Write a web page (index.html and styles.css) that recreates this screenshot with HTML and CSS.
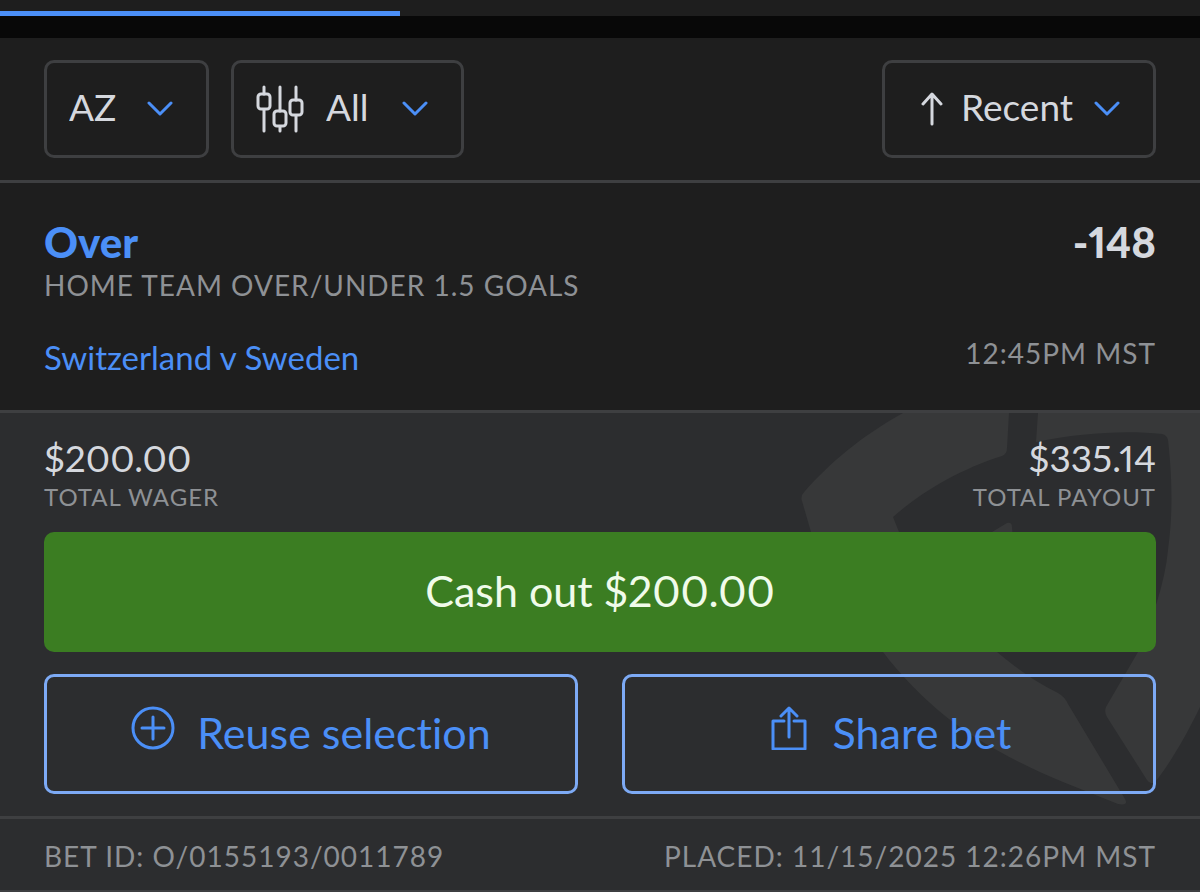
FILE: index.html
```html
<!DOCTYPE html>
<html lang="en">
<head>
  <meta charset="UTF-8">
  <meta name="viewport" content="width=device-width, initial-scale=1.0">
  <title>My Bets</title>
  <link rel="stylesheet" href="styles.css">
</head>
<body>
  <div class="tabs"><div class="tab-indicator"></div></div>

  <div class="filters">
    <div class="picker">
      <select class="state" aria-label="State"><option>AZ</option></select>
      <svg class="chevron" viewBox="0 0 28 16"><path d="M3 2l11 11L25 2"/></svg>
    </div>
    <div class="picker">
      <svg class="sliders" viewBox="0 0 48 48">
        <path d="M8 2v7M8 25v21M24 2v24M24 42v4M40 2v13M40 31v15"/>
        <rect x="2" y="9" width="12" height="15" rx="3"/>
        <rect x="18" y="26" width="12" height="15" rx="3"/>
        <rect x="34" y="15" width="12" height="15" rx="3"/>
      </svg>
      <select class="type" aria-label="Bet type"><option>All</option></select>
      <svg class="chevron" viewBox="0 0 28 16"><path d="M3 2l11 11L25 2"/></svg>
    </div>
    <div class="picker sort">
      <svg class="arrow" viewBox="0 0 22 34"><path d="M11 32V3M2 12l9-10 9 10"/></svg>
      <select class="order" aria-label="Sort by"><option>Recent</option></select>
      <svg class="chevron" viewBox="0 0 28 16"><path d="M3 2l11 11L25 2"/></svg>
    </div>
  </div>

  <div class="bet">
    <div class="row">
      <h1>Over</h1>
      <span class="odds">-148</span>
    </div>
    <p class="label">HOME TEAM OVER/UNDER 1.5 GOALS</p>
    <div class="row event">
      <a href="#" class="match">Switzerland v Sweden</a>
      <span class="label">12:45PM MST</span>
    </div>
  </div>

  <div class="summary">
    <svg class="watermark" viewBox="0 0 400 402">
      <path d="M103 0C60 24 30 50 5 78Q0 83 2 88L11 119Q34 187 83 239C98 259 125 288 153 309C180 330 226 354 263 369L318 391Q329 393 325 386L268 291Q265 284 258 280C238 270 220 258 197 239Q130 190 99 119L93 104C120 80 160 56 202 43Q207 41 207 35L209 0Z"/>
      <path d="M185 140L192 119L207 110Q212 109 212 114L214 140Z"/>
      <path d="M238 0L236 29C280 20 325 17 362 21Q367 22 368 27C374 80 371 115 368 137C365 170 352 207 338 239L306 294Q304 299 307 304L347 367Q351 373 356 368C370 350 385 325 400 294V0Z"/>
    </svg>
    <div class="row">
      <div>
        <p class="amount">$200.00</p>
        <p class="label small">TOTAL WAGER</p>
      </div>
      <div class="right">
        <p class="amount">$335.14</p>
        <p class="label small">TOTAL PAYOUT</p>
      </div>
    </div>
    <button class="cashout">Cash out $200.00</button>
    <div class="actions">
      <button class="outline">
        <svg viewBox="0 0 44 44"><circle cx="22" cy="22" r="20"/><path d="M22 11v22M11 22h22"/></svg>
        Reuse selection
      </button>
      <button class="outline">
        <svg viewBox="0 0 44 44"><path d="M17 15H6v28h32V15H27M22 31V3M14 10l8-8 8 8"/></svg>
        Share bet
      </button>
    </div>
  </div>

  <div class="footer">
    <span class="label">BET ID: O/0155193/0011789</span>
    <span class="label">PLACED: 11/15/2025 12:26PM MST</span>
  </div>
</body>
</html>
```
FILE: styles.css
```css
* {
  box-sizing: border-box;
}
body {
  margin: 0;
  background: #1e1e1e;
  color: #d5d8de;
  font-family: Lato, "Open Sans", sans-serif;
  font-size: 37px;
  font-variant-ligatures: none;
  font-variant-numeric: proportional-nums;
}
h1, p {
  margin: 0;
}
svg {
  fill: none;
  stroke-linecap: round;
  stroke-linejoin: round;
  stroke-width: 3px;
}
.tabs {
  height: 38px;
  padding-top: 11px;
  border-bottom: 22px solid #080808;
}
.tab-indicator {
  width: 33.33%;
  height: 5px;
  background: #4b8ff7;
}
.filters {
  display: flex;
  gap: 22px;
  padding: 22px 44px;
  border-bottom: 3px solid #3e3f41;
}
.picker {
  display: flex;
  align-items: center;
  height: 98px;
  padding: 0 32px 0 22px;
  border: 3px solid #3e3f41;
  border-radius: 10px;
}
.picker select {
  appearance: none;
  padding: 0 0 4px;
  border: none;
  background: none;
  color: inherit;
  font-family: inherit;
  font-size: 37px;
  line-height: 44px;
}
.state {
  width: 77px;
}
.type {
  width: 75px;
}
.order {
  width: 132px;
}
.sort {
  margin-left: auto;
  padding-left: 36px;
}
.chevron {
  width: 28px;
  height: 16px;
  stroke: #4b8ff7;
}
.sliders {
  width: 48px;
  height: 48px;
  margin-right: 22px;
  stroke: #d5d8de;
}
.arrow {
  width: 22px;
  height: 34px;
  margin-right: 18px;
  stroke: #d5d8de;
}
.row {
  display: flex;
  justify-content: space-between;
}
.label {
  color: #8e9195;
  font-size: 28px;
  font-variant-numeric: tabular-nums;
  line-height: 36px;
  letter-spacing: 1px;
}
.small {
  font-size: 24px;
  line-height: 32px;
}
.bet {
  height: 230px;
  padding: 34px 44px 0;
  border-bottom: 3px solid #3e3f41;
}
h1, .odds {
  font-size: 42px;
  font-weight: 900;
  line-height: 50px;
}
h1, .match {
  color: #4b8ff7;
}
.event {
  margin-top: 32px;
}
.match {
  font-size: 33px;
  line-height: 44px;
  text-decoration: none;
}
.summary {
  position: relative;
  padding: 22px 44px;
  background: #2c2d2f;
  border-bottom: 3px solid #3e3f41;
}
.summary .row, .cashout, .actions {
  position: relative;
}
.watermark {
  position: absolute;
  top: 0;
  right: 0;
  width: 400px;
  height: 402px;
  fill: #373839;
}
.amount {
  line-height: 46px;
}
.right {
  text-align: right;
}
button {
  height: 120px;
  padding: 0 0 4px;
  border: none;
  border-radius: 10px;
  font-family: inherit;
  font-size: 43px;
  font-variant: inherit;
  cursor: pointer;
}
.cashout {
  display: block;
  width: 100%;
  margin-top: 19px;
  background: #3b7d22;
  color: #f0fbea;
}
.actions {
  display: grid;
  grid-template-columns: 1fr 1fr;
  gap: 44px;
  margin-top: 22px;
}
.outline {
  display: flex;
  align-items: center;
  justify-content: center;
  gap: 22px;
  border: 3px solid #7daaf5;
  background: none;
  color: #4b8ff7;
}
.outline svg {
  width: 44px;
  height: 44px;
  margin-bottom: 8px;
  stroke: #4b8ff7;
}
.footer {
  display: flex;
  justify-content: space-between;
  padding: 19px 44px 16px;
  background: #2c2d2f;
  border-bottom: 3px solid #3e3f41;
}
```
